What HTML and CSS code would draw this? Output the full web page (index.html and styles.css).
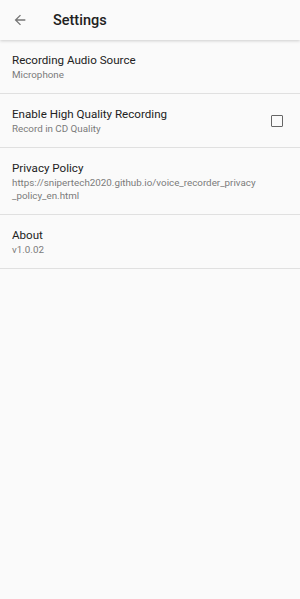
FILE: index.html
```html
<!DOCTYPE html>
<html lang="en">
  <head>
    <meta charset="UTF-8" />
    <meta name="viewport" content="width=device-width, initial-scale=1.0" />
    <title>Settings</title>
    <link rel="stylesheet" href="styles.css">
  </head>
  <body>
    <header class="toolbar">
      <button type="button" class="back">
        <svg width="16" height="16" viewBox="0 0 24 24">
          <path d="M20 11H7.83l5.59-5.59L12 4l-8 8 8 8 1.41-1.41L7.83 13H20v-2z" fill="#757575"/>
        </svg>
      </button>
      <h1 class="title">Settings</h1>
    </header>
    <div class="list">
      <div class="item">
        <div class="text">
          <div class="label">Recording Audio Source</div>
          <div class="summary">Microphone</div>
        </div>
      </div>
      <div class="item">
        <div class="text">
          <div class="label">Enable High Quality Recording</div>
          <div class="summary">Record in CD Quality</div>
        </div>
        <span class="check"></span>
      </div>
      <div class="item">
        <div class="text">
          <div class="label">Privacy Policy</div>
          <div class="summary">https://snipertech2020.github.io/voice_recorder_privacy<br>_policy_en.html</div>
        </div>
      </div>
      <div class="item">
        <div class="text">
          <div class="label">About</div>
          <div class="summary">v1.0.02</div>
        </div>
      </div>
    </div>
  </body>
</html>
```

FILE: styles.css
```css
body {
  margin: 0;
  background: #fafafa;
  font-family: Roboto, "Noto Sans", sans-serif;
  color: #212121;
}
.toolbar {
  display: flex;
  align-items: center;
  height: 40px;
  background: #fafafa;
  box-shadow: 0 1px 3px rgba(0, 0, 0, 0.18);
  position: relative;
}
.back {
  display: flex;
  align-items: center;
  justify-content: center;
  width: 40px;
  height: 40px;
  padding: 0;
  border: none;
  background: none;
}
.title {
  margin: 0 0 0 13px;
  font-size: 14.5px;
  font-weight: 500;
  color: #212121;
}
.item {
  display: flex;
  align-items: center;
  padding: 13px 12px 12px;
  border-bottom: 1px solid #e0e0e0;
}
.text {
  flex: auto;
}
.label {
  font-size: 11.6px;
  line-height: 14px;
  color: #222;
}
.summary {
  margin-top: 1px;
  font-size: 9.8px;
  line-height: 13px;
  color: #7a7a7a;
}
.check {
  width: 10px;
  height: 10px;
  margin-right: 5px;
  border: 1.6px solid #666;
  border-radius: 1px;
}
```
